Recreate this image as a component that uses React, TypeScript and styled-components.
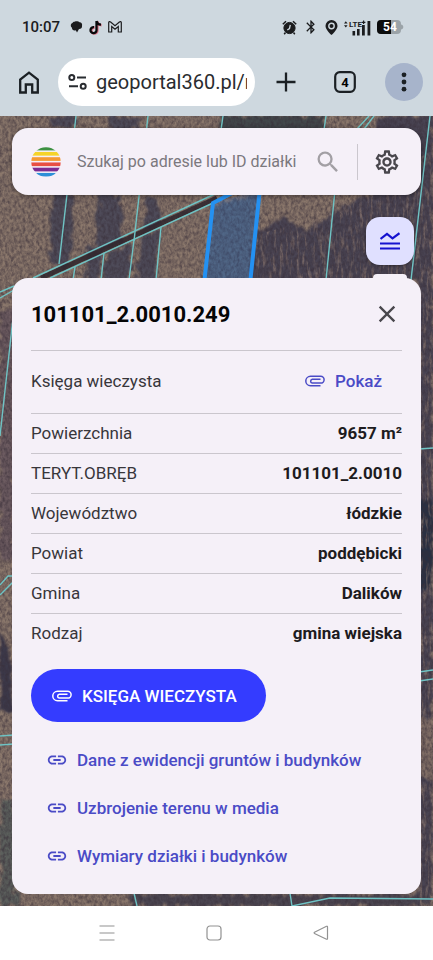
import React from "react";
import styled, { createGlobalStyle, css } from "styled-components";
import { MdBluetooth, MdClose, MdLink, MdOutlineSettings, MdSearch } from "react-icons/md";

const GlobalStyle = createGlobalStyle`
  *, *::before, *::after { box-sizing: border-box; }
  body { margin: 0; background: #ced8df; }
  body, button, input { font-family: Roboto, "Noto Sans", sans-serif; }
  button { border: 0; padding: 0; background: none; color: inherit; cursor: pointer; }
  h1, dl, dd, ul { margin: 0; padding: 0; }
`;

const Phone = styled.div`
  display: flex;
  flex-direction: column;
  min-height: 100vh;
`;

const StatusBar = styled.div`
  display: flex;
  align-items: center;
  justify-content: space-between;
  height: 54px;
  padding: 0 29px 0 22px;
  color: #1b1c1e;
`;

const StatusGroup = styled.div`
  display: flex;
  align-items: center;
  gap: 6px;
`;

const Clock = styled.time`
  margin-right: 4px;
  font-size: 15px;
  font-weight: 500;
`;

const BrowserBar = styled.header`
  display: flex;
  align-items: center;
  height: 62px;
  padding: 0 10px 6px 16px;
  color: #1b2024;
`;

const BarButton = styled.button<{ $tinted?: boolean }>`
  display: flex;
  align-items: center;
  justify-content: center;
  flex: none;
  width: 38px;
  height: 38px;
  border-radius: 50%;
  ${({ $tinted }) => $tinted && css`background: #a7b4cb;`}
`;

const BarActions = styled.div`
  display: flex;
  flex: none;
  align-items: center;
  gap: 21px;
  margin-left: 12px;
`;

const AddressBox = styled.label`
  display: flex;
  flex: 1;
  align-items: center;
  gap: 9px;
  min-width: 0;
  height: 48px;
  margin-left: 16px;
  padding: 0 8px 0 10px;
  border-radius: 24px;
  background: #fff;
`;

const AddressInput = styled.input`
  flex: 1;
  min-width: 0;
  padding: 0;
  border: 0;
  outline: 0;
  background: none;
  color: #2a2c30;
  font-size: 20px;
`;

const MapArea = styled.main`
  position: relative;
  display: flex;
  flex: 1;
  flex-direction: column;
  overflow: hidden;
  padding: 12px;
  background: #655952;
`;

const MapPicture = styled.svg`
  position: absolute;
  inset: 0;
  width: 100%;
  height: 100%;
`;

const SearchBar = styled.form`
  position: relative;
  display: flex;
  align-items: center;
  height: 67px;
  padding: 0 20px 0 19px;
  border-radius: 16px;
  background: #f5f0f8;
  box-shadow: 0 1px 4px rgba(0, 0, 0, 0.4);
`;

const SearchInput = styled.input`
  flex: 1;
  min-width: 0;
  margin-left: 16px;
  padding: 0;
  border: 0;
  outline: 0;
  background: none;
  font-size: 16px;
  &::placeholder { color: #7b787e; opacity: 1; }
`;

const IconButton = styled.button<{ $tone: string }>`
  display: flex;
  flex: none;
  color: ${({ $tone }) => $tone};
`;

const Separator = styled.span`
  width: 1px;
  height: 36px;
  margin: 0 15px;
  background: #cbc7ce;
`;

const LayersButton = styled.button`
  position: relative;
  display: flex;
  align-self: flex-end;
  align-items: center;
  justify-content: center;
  width: 48px;
  height: 48px;
  margin: 22px 7px 0 0;
  border-radius: 14px;
  background: #e0e0ff;
  color: #1512cf;
  box-shadow: 0 1px 3px rgba(0, 0, 0, 0.35);
`;

const NextMapButton = styled.button`
  position: relative;
  align-self: flex-end;
  width: 34px;
  height: 12px;
  margin: 9px 14px -8px 0;
  border-radius: 4px;
  background: #f5f0f8;
`;

const Sheet = styled.section`
  position: relative;
  flex: 1;
  padding: 0 19px;
  border-radius: 16px;
  background: #f5f0f8;
`;

const SheetHeader = styled.div`
  display: flex;
  align-items: center;
  justify-content: space-between;
  height: 72px;
  padding-right: 1px;
`;

const Title = styled.h1`
  color: #050506;
  font-size: 22px;
  font-weight: 700;
`;

const Facts = styled.dl`
  display: flex;
  flex-direction: column;
`;

const FactRow = styled.div<{ $tall?: boolean }>`
  display: flex;
  align-items: center;
  justify-content: space-between;
  height: ${({ $tall }) => ($tall ? 63 : 40)}px;
  padding-bottom: 2px;
  border-top: 1px solid #cac6cd;
`;

const FactName = styled.dt`
  color: #38363b;
  font-size: 17px;
`;

const FactValue = styled.dd`
  color: #1d1b20;
  font-size: 17px;
  font-weight: 700;
`;

const ShowButton = styled.button`
  display: flex;
  align-items: center;
  gap: 10px;
  margin-right: 20px;
  color: #4a4bc6;
  font-size: 17px;
  font-weight: 500;
`;

const RegisterButton = styled.button`
  display: flex;
  align-items: center;
  gap: 10px;
  height: 53px;
  margin-top: 16px;
  padding: 0 29px 0 21px;
  border-radius: 27px;
  background: #343cff;
  color: #fff;
  font-size: 17px;
  font-weight: 500;
`;

const LinkList = styled.ul`
  display: flex;
  flex-direction: column;
  margin-top: 14px;
  padding-left: 15px;
  list-style: none;
`;

const SheetLink = styled.a`
  display: flex;
  align-items: center;
  gap: 9px;
  height: 48px;
  color: #4a4bc6;
  font-size: 17px;
  font-weight: 500;
  text-decoration: none;
`;

const SystemNav = styled.nav`
  display: flex;
  align-items: center;
  justify-content: center;
  gap: 83px;
  height: 54px;
  padding-right: 6px;
  background: #fff;
  color: #929292;
`;

const NavButton = styled.button`
  display: flex;
  align-items: center;
  justify-content: center;
  width: 24px;
  height: 24px;
`;

const facts = [
  ["Powierzchnia", "9657 m²"],
  ["TERYT.OBRĘB", "101101_2.0010"],
  ["Województwo", "łódzkie"],
  ["Powiat", "poddębicki"],
  ["Gmina", "Dalików"],
  ["Rodzaj", "gmina wiejska"],
];

const links = [
  "Dane z ewidencji gruntów i budynków",
  "Uzbrojenie terenu w media",
  "Wymiary działki i budynków",
];

const parcelLines = [
  "M76 116L59 264", "M148 116L134 241", "M33 278L217 193", "M50 278L213 203",
  "M75 267L73 280", "M104 253L101 280", "M134 240L129 280", "M161 227L156 280",
  "M223 116L221 130", "M326 116L324 130", "M335 190L326 280", "M430 116L411 280",
  "M357 129L369 116", "M364 129L374 116", "M0 292L14 286", "M0 298L14 290",
  "M13 318L0 436", "M14 576H8L0 585", "M14 581L0 595", "M0 736L14 735", "M0 745L14 744",
  "M419 449L433 448", "M419 672L433 670", "M419 681L433 679",
  "M134 893L137 906", "M290 893L292 906L330 898L433 899",
];

function AerialMap() {
  return (
    <MapPicture viewBox="0 116 433 790" preserveAspectRatio="xMidYMin slice" aria-hidden="true">
      <defs>
        <filter id="grain" x="0" y="0" width="100%" height="100%" colorInterpolationFilters="sRGB">
          <feTurbulence type="fractalNoise" baseFrequency="0.35 0.25" numOctaves="4" seed="8" />
          <feColorMatrix values="0 0 0 0 0.22  0 0 0 0 0.18  0 0 0 0 0.22  1.6 1 0 0 -0.9" />
        </filter>
        <filter id="rough" x="-20%" y="-20%" width="140%" height="140%" colorInterpolationFilters="sRGB">
          <feTurbulence type="fractalNoise" baseFrequency="0.16 0.08" numOctaves="3" seed="3" result="noise" />
          <feDisplacementMap in="SourceGraphic" in2="noise" scale="12" xChannelSelector="R" yChannelSelector="G" />
          <feGaussianBlur stdDeviation="1" />
        </filter>
        <filter id="streaks" x="0" y="0" width="100%" height="100%" colorInterpolationFilters="sRGB">
          <feTurbulence type="fractalNoise" baseFrequency="0.3 0.06" numOctaves="3" seed="12" />
          <feColorMatrix values="0 0 0 0 0.56  0 0 0 0 0.48  0 0 0 0 0.44  4 0 0 0 -1.9" />
        </filter>
        <clipPath id="forest"><path d="M250 282L258 234L290 226L335 205L360 190L433 150V906H419V282Z" /></clipPath>
      </defs>
      <rect y="116" width="433" height="790" fill="#8a776b" />
      <g filter="url(#rough)">
        <path d="M50 116H76L74 128H54ZM110 116H140L136 130H112ZM52 194L74 194L68 270L50 262ZM98 194L120 194L122 244L98 250ZM146 194L160 200L162 222L143 236ZM88 240L102 256L98 282L86 282ZM106 254L132 244L129 282L103 282ZM140 238L160 230L155 282L136 282Z" fill="#4e4b59" />
        <path d="M223 116H324V132H221Z" fill="#42484b" />
        <path d="M378 116H433V906H419V282H250L256 232L283 218L305 230L340 206L380 190Z" fill="#494453" />
        <path d="M214 205L260 195L250 282H203Z" fill="#56606f" />
        <path d="M0 310H14V560H0Z" fill="#6c5b60" />
        <path d="M0 628L9 650L13 712H0Z" fill="#3c394a" />
        <path d="M419 500H433V590H419Z" fill="#283043" />
        <path d="M419 720H433V780H419Z" fill="#7e6c64" />
        <path d="M0 800H14V893H20V906H0Z" fill="#5b5f5c" />
        <path d="M130 894H433V906H130Z" fill="#4c4752" />
      </g>
      <g clipPath="url(#forest)">
        <rect x="250" y="116" width="183" height="790" filter="url(#streaks)" opacity="0.6" />
      </g>
      <rect y="116" width="433" height="790" filter="url(#grain)" opacity="0.6" />
      <path d="M41 278L217 198" stroke="#30262d" strokeWidth="5" opacity="0.85" />
      <path d="M213 203L261 190L251 280H203Z" fill="#3388ff" opacity="0.16" />
      <g fill="none" stroke="#6fc3c4" strokeWidth="1.4">
        {parcelLines.map((line) => <path key={line} d={line} />)}
      </g>
      <path d="M204 284L213 203L238 190M260 188L250 284" fill="none" stroke="#2491f2" strokeWidth="4" />
    </MapPicture>
  );
}

function RainbowLogo() {
  const bands = ["#3d9142", "#f6d429", "#f59a33", "#e84f43", "#7c2c91", "#2c8fd8"];
  return (
    <svg width="30" height="30" viewBox="0 0 30 30" aria-hidden="true">
      <clipPath id="disc"><circle cx="15" cy="15" r="14.7" /></clipPath>
      <g clipPath="url(#disc)">
        {bands.map((color, i) => <rect key={color} y={i * 5.25 - 0.3} width="30" height="3.7" fill={color} />)}
      </g>
    </svg>
  );
}

function ClipIcon() {
  return (
    <svg width="20" height="12" viewBox="0 0 20 12" fill="none" stroke="currentColor" strokeWidth="1.5" aria-hidden="true">
      <path d="M15.500 10.700H5.500A4.700 4.700 0 0 1 5.500 1.300H15.700A3.400 3.400 0 0 1 15.700 8.100H7.200A2 2 0 0 1 7.200 4.200H15.500" />
    </svg>
  );
}

export default function App() {
  return (
    <>
      <GlobalStyle />
      <Phone>
        <StatusBar>
          <StatusGroup>
            <Clock>10:07</Clock>
            <svg width="13" height="12" viewBox="0 0 12 12" fill="currentColor"><path d="M4 .8C6-.2 8 .5 9 1.2 11 1 12 3 11.5 4.8c.2 2-1 3.3-3 3.2L6.500 11.500 5.300 9.200C3 10 1.200 8.500 1.500 6.700-.3 5.500 0 2.500 2 2 2.300 1.300 3.200.800 4 .800z" /></svg>
            <svg width="13" height="15" viewBox="0 0 13 15" fill="none"><path d="M7.800 1V10.200A3 3 0 1 1 5.200 7.200M7.800 1C8.200 3.500 9.800 4.600 12 4.700" stroke="#d66f80" strokeWidth="2.400" transform="translate(.6 .5)" /><path d="M7.500 1V10.200A3 3 0 1 1 5 7.200M7.500 1C8 3.500 9.500 4.600 12 4.700" stroke="#08090b" strokeWidth="2.300" /></svg>
            <svg width="14" height="12" viewBox="0 0 14 12" fill="none" stroke="currentColor"><path d="M.7 11V1.600C.7.500 2 .5 2.600 1L7 4.600 11.400 1C12 .5 13.300.500 13.300 1.600V11H10.300V5.500L7 8.300 3.700 5.500V11Z" strokeWidth="1.200" /></svg>
          </StatusGroup>
          <StatusGroup>
            <svg width="15" height="15" viewBox="0 0 15 15" fill="none" stroke="currentColor"><circle cx="7.500" cy="8" r="5.600" fill="currentColor" /><path d="M.800 4.200L4 1.200M14.200 4.200L11 1.200M3.500 12.500L2.200 14.200M11.500 12.500L12.800 14.200" strokeWidth="1.500" /><path d="M8.300 4.800L7.500 8.500 5.300 10" stroke="#ced8df" strokeWidth="1.300" /></svg>
            <MdBluetooth size={16} />
            <svg width="13" height="15" viewBox="0 0 13 15"><path d="M6.500 0a6 6 0 0 1 6 6c0 4-6 9-6 9s-6-5-6-9a6 6 0 0 1 6-6z" fill="currentColor" /><circle cx="6.500" cy="6" r="2.700" stroke="#ced8df" strokeWidth="1.400" fill="none" /></svg>
            <svg width="27" height="17" viewBox="0 0 27 17" fill="currentColor"><path d="M0 4.500L1.800 2.200 3.600 4.500ZM0 6.200H3.600L1.800 8.500ZM8.500 12h2.600v4.500H8.500zM13 10h2.600v6.500H13zM18 6h2.800v10.500H18zM23.500 2h2.800v14.500h-2.800z" /><text x="5" y="8" fontSize="8" fontWeight="700" fontFamily="Roboto">LTE</text><path d="M19 1.500h1.200v1.200h1.200v1.200h-1.200v1.200H19V3.900h-1.200V2.700H19z" /></svg>
            <svg width="27" height="14" viewBox="0 0 27 14"><path d="M4 0H20a4 4 0 0 1 4 4V4.500C25.300 4.500 26.300 5.500 26.300 7S25.300 9.500 24 9.500V10a4 4 0 0 1-4 4H4a4 4 0 0 1-4-4V4a4 4 0 0 1 4-4z" fill="#9ba3a8" /><path d="M4 0H14V14H4a4 4 0 0 1-4-4V4a4 4 0 0 1 4-4z" fill="#0b0c0d" /><text x="6" y="11" fill="#fff" fontSize="12" fontWeight="700" fontFamily="Roboto">54</text></svg>
          </StatusGroup>
        </StatusBar>
        <BrowserBar>
          <IconButton $tone="#1b2024" type="button" aria-label="Strona główna">
            <svg width="26" height="26" viewBox="0 0 26 26" fill="none" stroke="currentColor" strokeWidth="2.300"><path d="M4.200 23.500V10.500L13 3.700 21.800 10.500V23.500H16.200V15.500H9.800V23.500Z" /></svg>
          </IconButton>
          <AddressBox>
            <svg width="19" height="16" viewBox="0 0 19 16" fill="none" stroke="#292c31" strokeWidth="2"><circle cx="3.800" cy="3.600" r="2.500" /><path d="M9 3.600H18M1 12.300H10" /><circle cx="15.200" cy="12.300" r="2.500" /></svg>
            <AddressInput aria-label="Adres" defaultValue="geoportal360.pl/mapa" />
          </AddressBox>
          <BarActions>
            <BarButton type="button" aria-label="Nowa karta">
              <svg width="20" height="20" viewBox="0 0 20 20" stroke="currentColor" strokeWidth="2.300"><path d="M10 .5V19.500M.5 10H19.500" /></svg>
            </BarButton>
            <BarButton type="button" aria-label="Karty: 4">
              <svg width="22" height="22" viewBox="0 0 22 22"><rect x="1.200" y="1.200" width="19.600" height="19.600" rx="4.500" fill="none" stroke="currentColor" strokeWidth="2.200" /><text x="11" y="15.500" textAnchor="middle" fontFamily="Roboto" fontSize="13" fontWeight="700">4</text></svg>
            </BarButton>
            <BarButton $tinted type="button" aria-label="Menu">
              <svg width="6" height="20" viewBox="0 0 6 20" fill="currentColor"><circle cx="3" cy="2.800" r="2.400" /><circle cx="3" cy="10" r="2.400" /><circle cx="3" cy="17.200" r="2.400" /></svg>
            </BarButton>
          </BarActions>
        </BrowserBar>
        <MapArea>
          <AerialMap />
          <SearchBar>
            <RainbowLogo />
            <SearchInput aria-label="Szukaj" placeholder="Szukaj po adresie lub ID działki" />
            <IconButton $tone="#a29fa4" type="submit" aria-label="Szukaj"><MdSearch size={28} /></IconButton>
            <Separator />
            <IconButton $tone="#49474d" type="button" aria-label="Ustawienia"><MdOutlineSettings size={28} /></IconButton>
          </SearchBar>
          <LayersButton type="button" aria-label="Warstwy mapy">
            <svg width="20" height="18" viewBox="0 0 20 18" fill="none" stroke="currentColor" strokeWidth="2.200"><path d="M0 16.500H20M0 11.500H20M.5 7L7 2 12.500 6.300 19.500 1.200" /></svg>
          </LayersButton>
          <NextMapButton type="button" aria-label="Narzędzia mapy" />
          <Sheet>
            <SheetHeader>
              <Title>101101_2.0010.249</Title>
              <IconButton $tone="#49474d" type="button" aria-label="Zamknij"><MdClose size={28} /></IconButton>
            </SheetHeader>
            <Facts>
              <FactRow $tall>
                <FactName>Księga wieczysta</FactName>
                <FactValue><ShowButton type="button"><ClipIcon />Pokaż</ShowButton></FactValue>
              </FactRow>
              {facts.map(([name, value]) => (
                <FactRow key={name}>
                  <FactName>{name}</FactName>
                  <FactValue>{value}</FactValue>
                </FactRow>
              ))}
            </Facts>
            <RegisterButton type="button"><ClipIcon />KSIĘGA WIECZYSTA</RegisterButton>
            <LinkList>
              {links.map((label) => (
                <li key={label}><SheetLink href="#"><MdLink size={22} />{label}</SheetLink></li>
              ))}
            </LinkList>
          </Sheet>
        </MapArea>
        <SystemNav>
          <NavButton type="button" aria-label="Ostatnie aplikacje"><svg width="16" height="16" viewBox="0 0 16 16" stroke="currentColor" strokeWidth="1.200"><path d="M.5 1H15.500M.5 8H15.500M.5 15H15.500" /></svg></NavButton>
          <NavButton type="button" aria-label="Ekran główny"><svg width="16" height="16" viewBox="0 0 16 16" fill="none" stroke="currentColor" strokeWidth="1.200"><rect x="1" y="1" width="14" height="14" rx="3" /></svg></NavButton>
          <NavButton type="button" aria-label="Wstecz"><svg width="16" height="16" viewBox="0 0 16 16" fill="none" stroke="currentColor" strokeWidth="1.200" strokeLinejoin="round"><path d="M1.500 7.200L13.500 1.300Q14.500 1 14.500 2V13.500Q14.500 14.500 13.500 14.200L1.500 8.500Q.700 7.800 1.500 7.200Z" /></svg></NavButton>
        </SystemNav>
      </Phone>
    </>
  );
}
